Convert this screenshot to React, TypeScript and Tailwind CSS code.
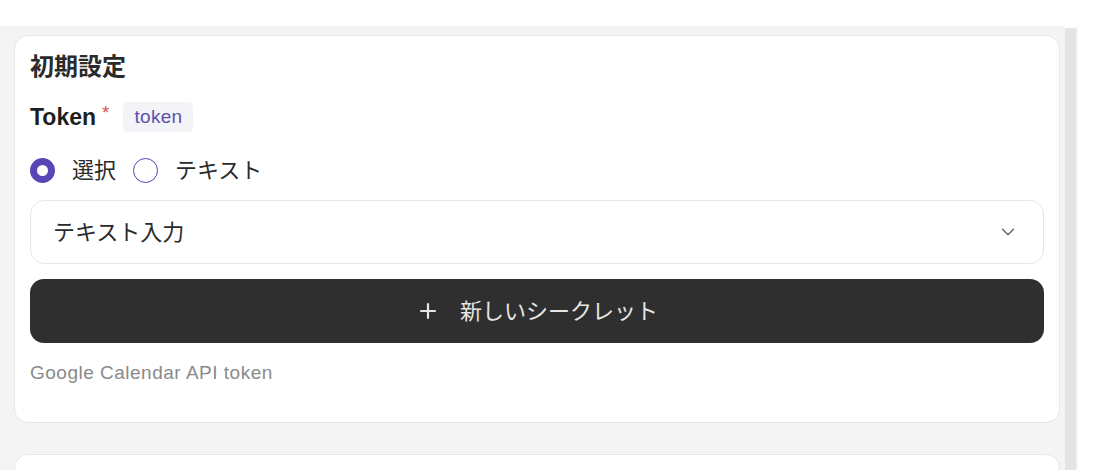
import { ChevronDown, Plus } from "lucide-react";

const font = "font-['Liberation_Sans','Noto_Sans_CJK_JP',sans-serif]";

function Radio({ checked, label }: { checked?: boolean; label: string }) {
  return (
    <label className="flex items-center gap-[17px]">
      {checked ? (
        <span className="w-[25px] h-[25px] rounded-full border-[7px] border-[#5a45b6] bg-white" />
      ) : (
        <span className="w-[25px] h-[25px] rounded-full border-[1.5px] border-[#5a45b6] bg-white" />
      )}
      <span className="text-[22px] text-[#2a2a2a] leading-none">{label}</span>
    </label>
  );
}

export default function App() {
  return (
    <div className={`w-[1098px] h-[470px] overflow-hidden bg-white ${font}`}>
      {/* top strip */}
      <div className="h-[26px] bg-white" />

      <div className="flex h-[444px]">
        {/* Main scroll area */}
        <div className="w-[1065px] bg-[#f4f4f4] pl-[14px] pr-[5px] pt-[9px] flex flex-col gap-[31px]">
          {/* Card */}
          <div className="bg-white border border-[#e7e7e7] rounded-[14px] px-[15px] pt-[17px] pb-[39px]">
            <h2 className="text-[24px] font-bold text-[#2b2b2b] leading-[28px]">初期設定</h2>

            {/* Token label */}
            <div className="flex items-center mt-[21px] h-[30px]">
              <span className="text-[23px] font-bold text-[#1f1f1f]">Token</span>
              <span className="text-[#d9534f] text-[19px] ml-[6px] -mt-[8px]">*</span>
              <span className="ml-[14px] h-[30px] px-[11px] flex items-center rounded-[5px] bg-[#f4f4f8] text-[#5b50ad] text-[19px] tracking-[0.3px]">
                token
              </span>
            </div>

            {/* Radios */}
            <div className="flex items-center gap-[17px] mt-[26px] h-[25px]">
              <Radio checked label="選択" />
              <Radio label="テキスト" />
            </div>

            {/* Select */}
            <div className="mt-[17px] h-[64px] border border-[#e6e6e6] rounded-[14px] flex items-center justify-between pl-[22px] pr-[24px]">
              <span className="text-[22px] text-[#2a2a2a]">テキスト入力</span>
              <ChevronDown className="w-[22px] h-[22px] text-[#6b6b6b]" strokeWidth={1.7} />
            </div>

            {/* Button */}
            <button className="mt-[15px] w-full h-[64px] rounded-[14px] bg-[#2f2f2f] flex items-center justify-center gap-[20px] text-[#e6e6e6]">
              <Plus className="w-[24px] h-[24px]" strokeWidth={2.2} />
              <span className="text-[22px]">新しいシークレット</span>
            </button>

            {/* Helper */}
            <p className="mt-[20px] text-[19px] leading-[20px] tracking-[0.5px] text-[#8a8a8a]">
              Google Calendar API token
            </p>
          </div>

          {/* Next card (cut off) */}
          <div className="bg-white border border-[#e7e7e7] rounded-[14px] h-[80px] shrink-0" />
        </div>

        {/* Scrollbar */}
        <div className="w-[11px] mt-[2px] bg-[#e4e4e4]" />
        <div className="w-[2px] bg-[#f4f4f4]" />
        <div className="flex-1 bg-white" />
      </div>
    </div>
  );
}
